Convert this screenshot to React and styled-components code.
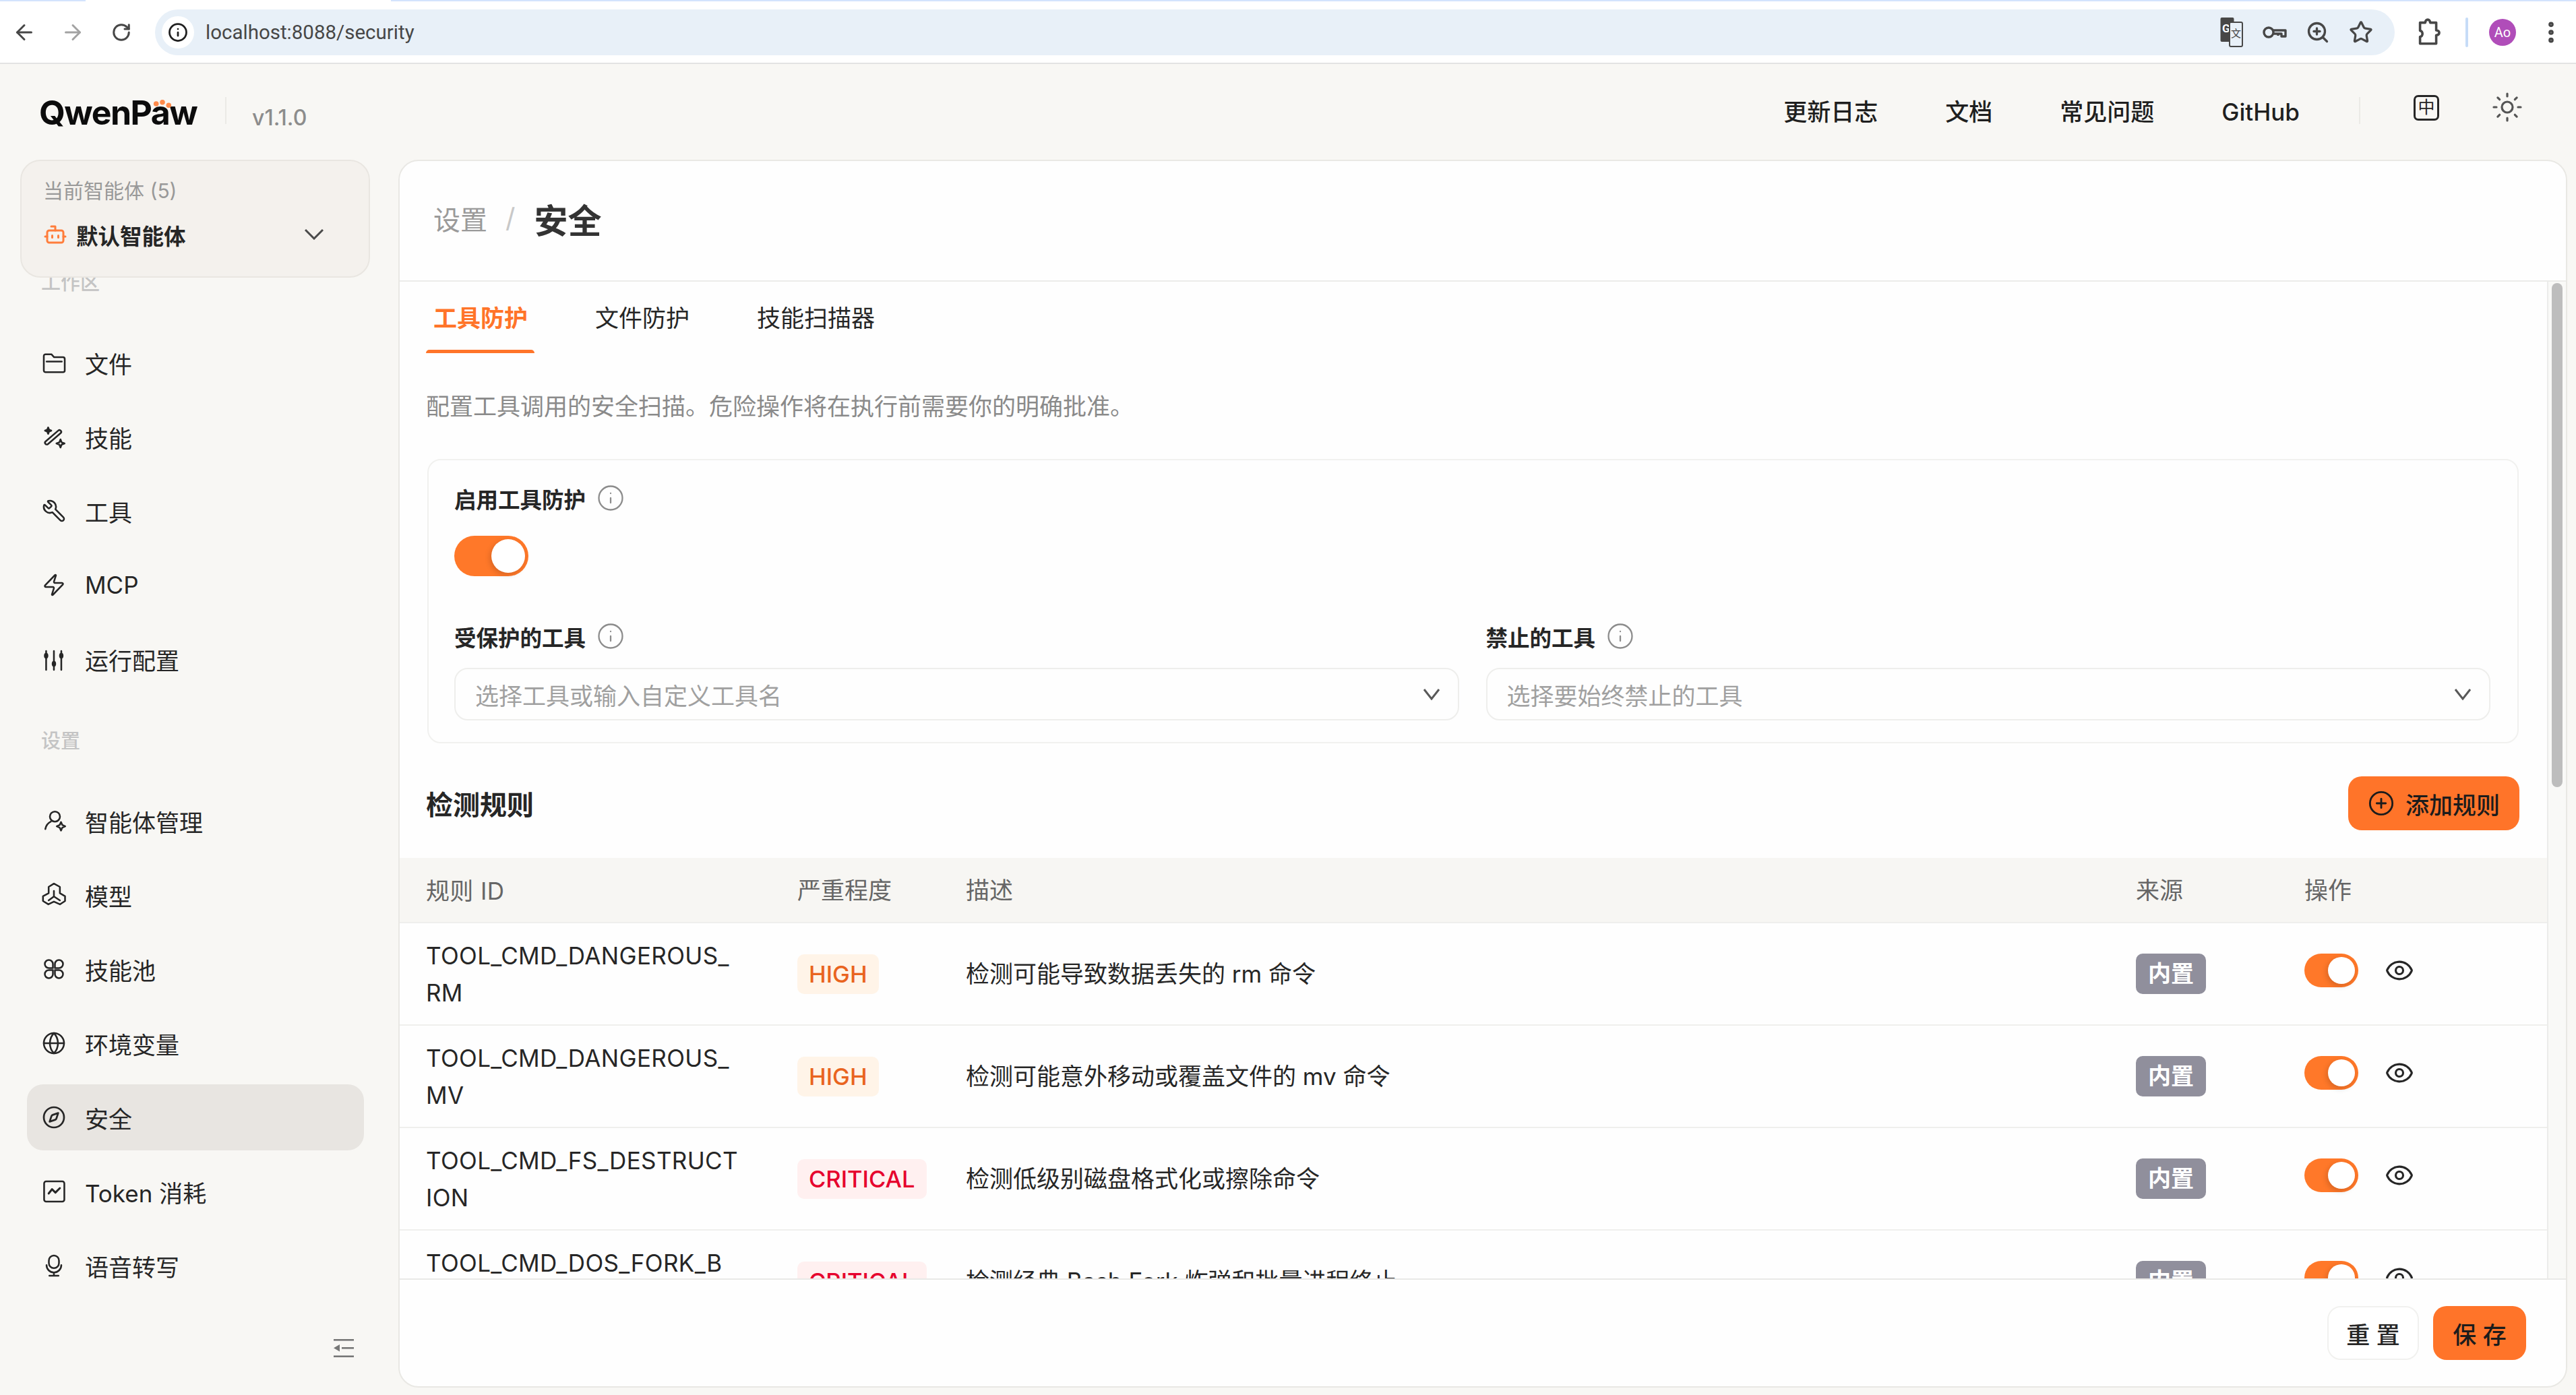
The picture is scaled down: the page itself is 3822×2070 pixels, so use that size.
import React from "react";
import styled, { createGlobalStyle } from "styled-components";
import {
  ArrowLeft,
  ArrowRight,
  RotateCw,
  Info,
  ZoomIn,
  Star,
  EllipsisVertical,
  Sun,
  Bot,
  Wrench,
  Zap,
  Globe,
  Compass,
  Eye,
  CirclePlus,
} from "lucide-react";

const GlobalStyle = createGlobalStyle`
  * { box-sizing: border-box; }
  html, body { margin: 0; padding: 0; background: #f8f7f4; }
  body {
    font-family: Inter, "Noto Sans CJK SC", sans-serif;
    color: #262626;
    font-size: 35px;
  }
`;

const Page = styled.div`
  width: 3822px;
  height: 2070px;
  display: flex;
  flex-direction: column;
  overflow: hidden;
  background: #f8f7f4;
`;

/* browser chrome */
const TabStrip = styled.div`
  display: flex;
  height: 2px;
  background: #d3e3fd;
`;

const ActiveTabGap = styled.div`
  width: 453px;
  margin-left: 127px;
  background: #fff;
`;

const Chrome = styled.div`
  height: 93px;
  display: flex;
  align-items: center;
  background: #fff;
  border-bottom: 2px solid #e3e3e3;
  color: #474747;
`;

const ChromeButton = styled.div`
  width: 72px;
  display: flex;
  justify-content: center;
  color: ${(props) => (props.$muted ? "#a3a3a3" : "#474747")};
`;

const UrlPill = styled.div`
  width: 3323px;
  height: 68px;
  margin-left: 14px;
  margin-right: 34px;
  border-radius: 34px;
  background: #e8f0f8;
  display: flex;
  align-items: center;
  padding: 0 30px 0 10px;
`;

const InfoBubble = styled.div`
  width: 48px;
  height: 48px;
  border-radius: 50%;
  background: #fff;
  color: #1f1f1f;
  display: flex;
  align-items: center;
  justify-content: center;
`;

const UrlText = styled.div`
  margin-left: 17px;
  flex: 1;
  font-family: Roboto, sans-serif;
  font-size: 29.5px;
  color: #474747;
`;

const PillIcons = styled.div`
  display: flex;
  align-items: center;
  gap: 24px;
  color: #474747;
`;

const PillIcon = styled.div`
  width: 40px;
  display: flex;
  justify-content: center;
`;

const ChromeDivider = styled.div`
  width: 4px;
  height: 44px;
  margin: 0 31px 0 35px;
  border-radius: 2px;
  background: #c6dcf7;
`;

const Avatar = styled.div`
  width: 40px;
  height: 40px;
  border-radius: 50%;
  background: #b04db9;
  color: #fff;
  font-family: Roboto, sans-serif;
  font-size: 20px;
  display: flex;
  align-items: center;
  justify-content: center;
`;

const MenuDots = styled.div`
  margin-left: 32px;
  display: flex;
`;

/* app header */
const AppHeader = styled.header`
  height: 142px;
  display: flex;
  align-items: flex-start;
  padding: 49px 0 0 58px;
`;

const Logo = styled.div`
  position: relative;
  width: 234px;
  height: 42px;
  padding-top: 3px;
  display: flex;
  align-items: center;
  font-family: Inter, sans-serif;
  font-weight: 700;
  font-size: 50px;
  letter-spacing: -1.5px;
  white-space: nowrap;
  color: #0c0c0c;
`;

const PawDots = styled.svg`
  position: absolute;
  left: 165px;
  top: 2px;
  width: 32px;
  height: 16px;
`;

const VDivider = styled.div`
  width: 2px;
  height: 40px;
  background: #ebeae6;
  margin-left: ${(props) => props.$left}px;
`;

const Version = styled.div`
  margin: 18px 0 0 38px;
  font-size: 32px;
  line-height: 26px;
  font-weight: 500;
  color: #8c8c8c;
`;

const TopNav = styled.nav`
  margin-left: auto;
  margin-top: 2px;
  display: flex;
  align-items: center;
  height: 40px;
  gap: 100px;
`;

const TopLink = styled.div`
  font-size: 35px;
  font-weight: 500;
  color: #1f1f1f;
  line-height: 40px;
`;

const HeaderTools = styled.div`
  display: flex;
  align-items: flex-start;
  height: 40px;
`;

const LangIcon = styled.div`
  width: 38px;
  height: 38px;
  margin: -3px 0 0 79px;
  border: 3px solid #262626;
  border-radius: 7px;
  font-size: 25px;
  line-height: 30px;
  text-align: center;
  color: #262626;
`;

const SunButton = styled.div`
  margin: -9px 78px 0 77px;
  color: #555;
  display: flex;
`;

/* body */
const Body = styled.div`
  flex: 1;
  min-height: 0;
  display: flex;
  padding-bottom: 11px;
`;

const Sidebar = styled.aside`
  width: 591px;
  flex: none;
  display: flex;
  flex-direction: column;
  position: relative;
`;

const AgentCard = styled.div`
  width: 519px;
  height: 175px;
  flex: none;
  margin-left: 30px;
  border: 2px solid #e9e6e1;
  border-radius: 30px;
  background: #f4f1ed;
  padding: 26px 0 0 32px;
`;

const AgentCaption = styled.div`
  font-size: 30px;
  line-height: 36px;
  color: #999;
`;

const AgentRow = styled.div`
  display: flex;
  align-items: center;
  margin-top: 29px;
  height: 36px;
`;

const AgentName = styled.div`
  margin-left: 13px;
  font-size: 32.5px;
  font-weight: 700;
  color: #262626;
`;

const AgentChevron = styled.div`
  margin-left: auto;
  margin-right: 67px;
  display: flex;
  color: #4a4a4a;
`;

const SideScroll = styled.div`
  flex: 1;
  min-height: 0;
  overflow: hidden;
  padding: 0 51px 0 40px;
`;

const SectionLabel = styled.div`
  height: 40px;
  margin: ${(props) => props.$top}px 0 49px 21px;
  font-size: 29px;
  line-height: 40px;
  font-weight: 500;
  color: #c4c4c4;
`;

const NavList = styled.div`
  display: flex;
  flex-direction: column;
  gap: 12px;
`;

const NavItem = styled.div`
  height: 98px;
  display: flex;
  align-items: center;
  gap: 27px;
  padding-left: 20px;
  border-radius: 24px;
  font-size: 35px;
  color: #262626;
  background: ${(props) => (props.$active ? "#e8e5e1" : "transparent")};
`;

const NavIcon = styled.span`
  width: 39px;
  height: 39px;
  display: flex;
  align-items: center;
  justify-content: center;
  color: #262626;
`;

const MirroredIcon = styled.span`
  display: flex;
  transform: scaleX(-1);
`;

const CollapseButton = styled.div`
  position: absolute;
  left: 495px;
  bottom: 45px;
  display: flex;
  color: #777;
`;

/* main panel */
const Panel = styled.main`
  width: 3218px;
  flex: none;
  display: flex;
  flex-direction: column;
  background: #fefefe;
  border: 2px solid #e9e8e4;
  border-radius: 30px;
  overflow: hidden;
`;

const PanelHeader = styled.div`
  height: 179px;
  flex: none;
  display: flex;
  align-items: center;
  padding: 0 0 8px 50px;
  border-bottom: 2px solid #ececea;
`;

const Crumb = styled.span`
  font-size: 40px;
  color: #9a9a9a;
`;

const CrumbSlash = styled.span`
  margin: 0 28px 0 27px;
  font-size: 40px;
  color: #c8c8c8;
`;

const CrumbCurrent = styled.span`
  font-size: 50px;
  font-weight: 700;
  color: #333;
`;

const PanelMiddle = styled.div`
  flex: 1;
  min-height: 0;
  display: flex;
`;

const ScrollBody = styled.div`
  flex: 1;
  min-width: 0;
  overflow: hidden;
`;

const ScrollTrack = styled.div`
  width: 28px;
  flex: none;
  background: #f9f9f7;
  border-left: 2px solid #ececea;
  padding: 2px 5px 0;
`;

const ScrollThumb = styled.div`
  height: 748px;
  border-radius: 8px;
  background: #bdbdbd;
`;

const Tabs = styled.div`
  display: flex;
  gap: 79px;
  margin-left: 39px;
  height: 106px;
`;

const Tab = styled.div`
  position: relative;
  padding: 27px 10px 0 11px;
  font-size: 35px;
  line-height: 54px;
  font-weight: ${(props) => (props.$active ? 600 : 400)};
  color: ${(props) => (props.$active ? "#ff7429" : "#262626")};

  &::after {
    content: "";
    display: ${(props) => (props.$active ? "block" : "none")};
    position: absolute;
    left: 0;
    right: 0;
    bottom: 0;
    height: 5px;
    border-radius: 5px 5px 0 0;
    background: #ff7429;
  }
`;

const Description = styled.div`
  margin: 52px 0 0 39px;
  line-height: 54px;
  color: #8a8a8a;
`;

const SettingsCard = styled.section`
  margin: 51px 42px 0 41px;
  height: 422px;
  padding: 36px 40px 0 38px;
  border: 2px solid #f1f1ef;
  border-radius: 20px;
`;

const FieldLabel = styled.div`
  display: flex;
  align-items: center;
  gap: 16px;
  height: 40px;
  font-size: 32.5px;
  font-weight: 600;
  color: #262626;
`;

const HelpIcon = styled.span`
  display: flex;
  color: #8c8c8c;
`;

const SwitchTrack = styled.div`
  width: ${(props) => (props.$large ? 110 : 80)}px;
  height: ${(props) => (props.$large ? 60 : 50)}px;
  border-radius: 30px;
  background: #ff7829;
  padding: 5px;
  display: flex;
  justify-content: flex-end;
  flex: none;
`;

const SwitchKnob = styled.div`
  width: ${(props) => (props.$large ? 50 : 40)}px;
  height: 100%;
  border-radius: 50%;
  background: #fff;
  box-shadow: -2px 3px 8px rgba(0, 0, 0, 0.16);
`;

const SwitchSpacing = styled.div`
  margin: 36px 0 69px;
`;

const FieldGrid = styled.div`
  display: grid;
  grid-template-columns: 1fr 1fr;
  column-gap: 40px;
`;

const SelectBox = styled.div`
  height: 78px;
  margin-top: 27px;
  display: flex;
  align-items: center;
  justify-content: space-between;
  padding: 0 27px 0 29px;
  border: 2px solid #eeeeec;
  border-radius: 20px;
  color: #a0a0a0;
`;

const SelectChevron = styled.span`
  display: flex;
  color: #595959;
`;

const RulesBar = styled.div`
  display: flex;
  align-items: center;
  justify-content: space-between;
  margin: 49px 41px 41px 39px;
`;

const RulesTitle = styled.h2`
  margin: 0;
  font-size: 40px;
  font-weight: 700;
  color: #262626;
`;

const PrimaryButton = styled.button`
  height: 80px;
  border: none;
  border-radius: 20px;
  background: #ff7429;
  color: #1c1c1c;
  font-family: inherit;
  font-size: 35px;
  font-weight: 500;
  display: flex;
  align-items: center;
  gap: ${(props) => (props.$gap ? props.$gap : 0)}px;
  padding: 0 29px;
`;

const RuleTable = styled.div`
  width: 100%;
`;

const TableRow = styled.div`
  display: grid;
  grid-template-columns: 549px 250px 1736px 250px 401px;
  align-items: center;
  height: ${(props) => (props.$head ? 97 : 152)}px;
  padding-top: ${(props) => (props.$head ? 1 : 0)}px;
  border-bottom: 2px solid #efefed;
  background: ${(props) => (props.$head ? "#f7f6f3" : "transparent")};
  color: ${(props) => (props.$head ? "#666" : "#262626")};
`;

const Cell = styled.div`
  padding: 0 41px;
  line-height: 54.6px;
`;

const RuleId = styled(Cell)`
  padding-left: 39px;
  padding-right: 45px;
  padding-top: 2px;
  letter-spacing: 0.35px;
  word-break: break-all;
`;

const SeverityBadge = styled.span`
  display: inline-block;
  height: 59px;
  padding: 0 17px;
  border-radius: 10px;
  line-height: 59px;
  font-size: 34.5px;
  font-weight: 500;
  color: ${(props) => (props.$level === "CRITICAL" ? "#e6002d" : "#e9641f")};
  background: ${(props) => (props.$level === "CRITICAL" ? "#fff0f0" : "#fff4e8")};
`;

const SourceBadge = styled.span`
  display: inline-block;
  width: 104px;
  height: 60px;
  border-radius: 10px;
  text-align: center;
  line-height: 60px;
  font-weight: 700;
  font-size: 34px;
  color: #fff;
  background: #908f9c;
`;

const RowActions = styled.div`
  display: flex;
  align-items: center;
  gap: 39px;
  margin-bottom: 10px;
  color: #262626;
`;

const PanelFooter = styled.div`
  height: 160px;
  flex: none;
  display: flex;
  justify-content: flex-end;
  align-items: flex-start;
  gap: 21px;
  padding: 39px 59px 0 0;
  border-top: 2px solid #e9e9e7;
`;

const GhostButton = styled.button`
  height: 80px;
  width: 136px;
  border: 2px solid #f1f1ef;
  border-radius: 20px;
  background: #fff;
  color: #262626;
  font-family: inherit;
  font-size: 35px;
  font-weight: 500;
`;

const SaveButton = styled(PrimaryButton)`
  width: 138px;
  padding: 0;
  justify-content: center;
`;

/* drawn icons */
const Glyph = ({ size = 36, children }) => (
  <svg
    width={size}
    height={size}
    viewBox="0 0 24 24"
    fill="none"
    stroke="currentColor"
    strokeWidth={1.7}
    strokeLinecap="round"
    strokeLinejoin="round"
    overflow="visible"
  >
    {children}
  </svg>
);

const Chevron = ({ width, height }) => (
  <svg width={width} height={height} viewBox={`0 0 ${width} ${height}`} fill="none" stroke="currentColor" strokeWidth="3">
    <path d={`M1 1L${width / 2} ${height - 2}L${width - 1} 1`} />
  </svg>
);

const FolderIcon = () => (
  <Glyph>
    <path d="M2 5.500A1.700 1.700 0 0 1 3.700 3.800H9.500l2.700 2.900h8.800A1.700 1.700 0 0 1 22.700 8.400V19.800A1.700 1.700 0 0 1 21 21.500H3.700A1.700 1.700 0 0 1 2 19.800z" />
    <path d="M4.800 11H19.800" />
  </Glyph>
);

const WandIcon = () => (
  <Glyph>
    <rect x="1.200" y="10.850" width="20" height="3.500" rx="1.750" transform="rotate(-40.600 11.200 12.600)" />
    <path d="M6.300 2.900l.9 2.200 2.200.9-2.200.9-.9 2.200-.9-2.200-2.200-.9 2.200-.9z" fill="currentColor" />
    <path d="M18.500 14.700l1.100 2.900 2.900 1.100-2.900 1.100-1.100 2.900-1.100-2.900-2.900-1.100 2.900-1.100z" />
  </Glyph>
);

const SlidersIcon = () => (
  <Glyph>
    <path d="M4.300 4v18.700M12 4v18.700M19.300 4v18.700" />
    <ellipse cx="4.300" cy="8.700" rx="1.300" ry="2" fill="currentColor" />
    <ellipse cx="12" cy="16.700" rx="1.300" ry="2" fill="currentColor" />
    <ellipse cx="19.300" cy="8.700" rx="1.300" ry="2" fill="currentColor" />
  </Glyph>
);

const AgentIcon = () => (
  <Glyph>
    <circle cx="13" cy="7.800" r="5" />
    <path d="M3.500 20.200c.5-3.500 2.500-6 5.500-7.500" />
    <path d="M19 13.200l1.300 2.900 2.900 1.300-2.900 1.300-1.300 2.900-1.300-2.900-2.900-1.300 2.900-1.300z" />
  </Glyph>
);

const ModelIcon = () => (
  <Glyph>
    <path d="M12 .8L17.900 4V10.200L23 13.200V18L17.900 21.300L12 18.600L6.500 21.300L1.200 18V13.200L6.800 10.200V4Z" />
    <path d="M12 8V13.500L6.800 17.300M12 13.500L17.900 17.300" />
  </Glyph>
);

const PoolIcon = () => (
  <Glyph>
    <path d="M11 11H7a4 4 0 1 1 4-4z" />
    <path d="M13 11V7a4 4 0 1 1 4 4z" />
    <path d="M11 13V17a4 4 0 1 1-4-4z" />
    <path d="M13 13H17a4 4 0 1 1-4 4z" />
  </Glyph>
);

const UsageIcon = () => (
  <Glyph>
    <rect x="2.300" y="2" width="20" height="20" rx="2" />
    <path d="M6.800 14L10.100 9.800L13.500 13.100L17.900 8.700" strokeWidth="2" />
  </Glyph>
);

const MicIcon = () => (
  <Glyph>
    <rect x="7" y="2" width="10" height="12.500" rx="5" />
    <path d="M4.700 11.500a7.300 7.300 0 0 0 14.600 0M12 18.800V22M7.500 22h9" />
  </Glyph>
);

const CollapseIcon = () => (
  <svg width="30" height="27" viewBox="0 0 30 27" fill="currentColor" stroke="none">
    <rect x="0" y="0" width="30" height="2.600" />
    <rect x="12" y="12" width="18" height="2.600" />
    <rect x="0" y="24.400" width="30" height="2.600" />
    <path d="M0 13.300L9 8v10.600z" />
  </svg>
);

const TranslateIcon = () => (
  <svg width="34" height="44" viewBox="0 0 34 44">
    <rect x="0.500" y="0" width="20" height="36" rx="2" fill="#474747" />
    <text x="3" y="22" fontFamily="Roboto, sans-serif" fontWeight="700" fontSize="17" fill="#fff">G</text>
    <rect x="14" y="7" width="19" height="36" rx="2" fill="#e8f0f8" stroke="#474747" strokeWidth="2" />
    <text x="16" y="29" fontFamily='"Noto Sans CJK SC", sans-serif' fontSize="15" fill="#474747">文</text>
  </svg>
);

const KeyIcon = () => (
  <svg width="36" height="22" viewBox="0 0 36 22" fill="none" stroke="currentColor" strokeWidth="3.400" strokeLinejoin="round">
    <circle cx="9" cy="11" r="7" />
    <path d="M16 8h18v9h-6v-4h-5v3M16 13h7" />
  </svg>
);

const ExtensionIcon = () => (
  <svg width="36" height="46" viewBox="0 0 30 38" fill="none" stroke="#474747" strokeWidth="3" strokeLinejoin="round">
    <path d="M3 7h6.500c0-5 6-5 6 0H23v9.500c5 0 5 6 0 6V33H3V24.500c4 0 4-7.500 0-7.500z" />
  </svg>
);

const navTop = [
  { label: "文件", icon: <FolderIcon /> },
  { label: "技能", icon: <WandIcon /> },
  { label: "工具", icon: <MirroredIcon><Wrench size={36} strokeWidth={1.7} /></MirroredIcon> },
  { label: "MCP", icon: <Zap size={36} strokeWidth={1.7} /> },
  { label: "运行配置", icon: <SlidersIcon /> },
];

const navSettings = [
  { label: "智能体管理", icon: <AgentIcon /> },
  { label: "模型", icon: <ModelIcon /> },
  { label: "技能池", icon: <PoolIcon /> },
  { label: "环境变量", icon: <Globe size={36} strokeWidth={1.7} /> },
  { label: "安全", icon: <Compass size={36} strokeWidth={1.8} />, active: true },
  { label: "Token 消耗", icon: <UsageIcon /> },
  { label: "语音转写", icon: <MicIcon /> },
];

const rules = [
  { id: "TOOL_CMD_DANGEROUS_RM", level: "HIGH", desc: "检测可能导致数据丢失的 rm 命令" },
  { id: "TOOL_CMD_DANGEROUS_MV", level: "HIGH", desc: "检测可能意外移动或覆盖文件的 mv 命令" },
  { id: "TOOL_CMD_FS_DESTRUCTION", level: "CRITICAL", desc: "检测低级别磁盘格式化或擦除命令" },
  { id: "TOOL_CMD_DOS_FORK_BOMB", level: "CRITICAL", desc: "检测经典 Bash Fork 炸弹和批量进程终止" },
];

const Switch = ({ large }) => (
  <SwitchTrack $large={large}>
    <SwitchKnob $large={large} />
  </SwitchTrack>
);

const NavGroup = ({ items }) => (
  <NavList>
    {items.map((item) => (
      <NavItem key={item.label} $active={item.active}>
        <NavIcon>{item.icon}</NavIcon>
        {item.label}
      </NavItem>
    ))}
  </NavList>
);

const Help = () => (
  <HelpIcon>
    <Info size={42} strokeWidth={1.3} />
  </HelpIcon>
);

export default function App() {
  return (
    <Page>
      <GlobalStyle />
      <TabStrip>
        <ActiveTabGap />
      </TabStrip>
      <Chrome>
        <ChromeButton><ArrowLeft size={36} strokeWidth={2} /></ChromeButton>
        <ChromeButton $muted><ArrowRight size={36} strokeWidth={2} /></ChromeButton>
        <ChromeButton><RotateCw size={30} strokeWidth={2.4} /></ChromeButton>
        <UrlPill>
          <InfoBubble><Info size={30} strokeWidth={2.2} /></InfoBubble>
          <UrlText>localhost:8088/security</UrlText>
          <PillIcons>
            <PillIcon><TranslateIcon /></PillIcon>
            <PillIcon><KeyIcon /></PillIcon>
            <PillIcon><ZoomIn size={36} strokeWidth={2.2} /></PillIcon>
            <PillIcon><Star size={36} strokeWidth={2.2} /></PillIcon>
          </PillIcons>
        </UrlPill>
        <ExtensionIcon />
        <ChromeDivider />
        <Avatar>Ao</Avatar>
        <MenuDots><EllipsisVertical size={40} strokeWidth={2.6} /></MenuDots>
      </Chrome>

      <AppHeader>
        <Logo>
          QwenPaw
          <PawDots viewBox="0 0 32 16" fill="#ff8a4a">
            <circle cx="8.700" cy="8" r="3.800" />
            <circle cx="18" cy="5.700" r="3.800" />
            <circle cx="27.300" cy="10.300" r="3.800" />
          </PawDots>
        </Logo>
        <VDivider $left={42} />
        <Version>v1.1.0</Version>
        <TopNav>
          <TopLink>更新日志</TopLink>
          <TopLink>文档</TopLink>
          <TopLink>常见问题</TopLink>
          <TopLink>GitHub</TopLink>
        </TopNav>
        <HeaderTools>
          <VDivider $left={88} />
          <LangIcon>中</LangIcon>
          <SunButton><Sun size={48} strokeWidth={1.6} /></SunButton>
        </HeaderTools>
      </AppHeader>

      <Body>
        <Sidebar>
          <AgentCard>
            <AgentCaption>当前智能体 (5)</AgentCaption>
            <AgentRow>
              <Bot size={36} strokeWidth={2} color="#ff7d3b" />
              <AgentName>默认智能体</AgentName>
              <AgentChevron><Chevron width={28} height={16} /></AgentChevron>
            </AgentRow>
          </AgentCard>
          <SideScroll>
            <SectionLabel $top={-12}>工作区</SectionLabel>
            <NavGroup items={navTop} />
            <SectionLabel $top={53}>设置</SectionLabel>
            <NavGroup items={navSettings} />
          </SideScroll>
          <CollapseButton><CollapseIcon /></CollapseButton>
        </Sidebar>

        <Panel>
          <PanelHeader>
            <Crumb>设置</Crumb>
            <CrumbSlash>/</CrumbSlash>
            <CrumbCurrent>安全</CrumbCurrent>
          </PanelHeader>

          <PanelMiddle>
            <ScrollBody>
              <Tabs>
                <Tab $active>工具防护</Tab>
                <Tab>文件防护</Tab>
                <Tab>技能扫描器</Tab>
              </Tabs>
              <Description>配置工具调用的安全扫描。危险操作将在执行前需要你的明确批准。</Description>

              <SettingsCard>
                <FieldLabel>
                  启用工具防护
                  <Help />
                </FieldLabel>
                <SwitchSpacing><Switch large /></SwitchSpacing>
                <FieldGrid>
                  <div>
                    <FieldLabel>
                      受保护的工具
                      <Help />
                    </FieldLabel>
                    <SelectBox>
                      选择工具或输入自定义工具名
                      <SelectChevron><Chevron width={24} height={17} /></SelectChevron>
                    </SelectBox>
                  </div>
                  <div>
                    <FieldLabel>
                      禁止的工具
                      <Help />
                    </FieldLabel>
                    <SelectBox>
                      选择要始终禁止的工具
                      <SelectChevron><Chevron width={24} height={17} /></SelectChevron>
                    </SelectBox>
                  </div>
                </FieldGrid>
              </SettingsCard>

              <RulesBar>
                <RulesTitle>检测规则</RulesTitle>
                <PrimaryButton $gap={16}>
                  <CirclePlus size={40} strokeWidth={1.7} />
                  添加规则
                </PrimaryButton>
              </RulesBar>

              <RuleTable>
                <TableRow $head>
                  <RuleId>规则 ID</RuleId>
                  <Cell>严重程度</Cell>
                  <Cell>描述</Cell>
                  <Cell>来源</Cell>
                  <Cell>操作</Cell>
                </TableRow>
                {rules.map((rule) => (
                  <TableRow key={rule.id}>
                    <RuleId>{rule.id}</RuleId>
                    <Cell><SeverityBadge $level={rule.level}>{rule.level}</SeverityBadge></Cell>
                    <Cell>{rule.desc}</Cell>
                    <Cell><SourceBadge>内置</SourceBadge></Cell>
                    <Cell>
                      <RowActions>
                        <Switch />
                        <Eye size={44} strokeWidth={1.7} />
                      </RowActions>
                    </Cell>
                  </TableRow>
                ))}
              </RuleTable>
            </ScrollBody>
            <ScrollTrack><ScrollThumb /></ScrollTrack>
          </PanelMiddle>

          <PanelFooter>
            <GhostButton>重 置</GhostButton>
            <SaveButton>保 存</SaveButton>
          </PanelFooter>
        </Panel>
      </Body>
    </Page>
  );
}
